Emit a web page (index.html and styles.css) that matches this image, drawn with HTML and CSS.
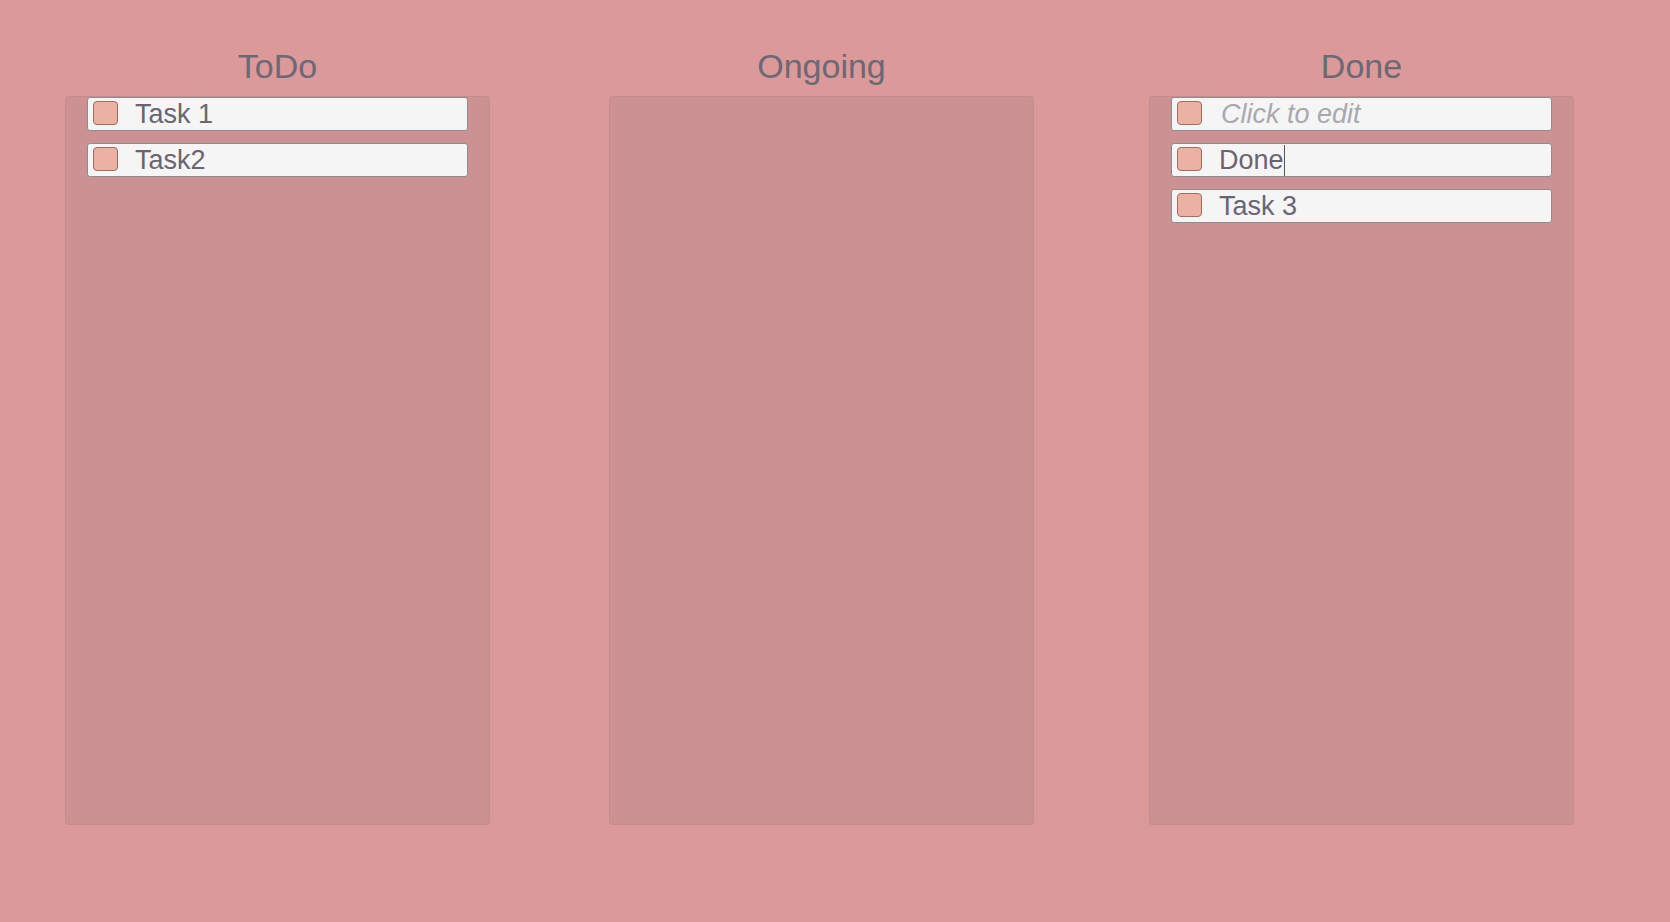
FILE: index.html
```html
<!DOCTYPE html>
<html>
<head>
<meta charset="utf-8">
<title>Board</title>
<link rel="stylesheet" href="styles.css">
</head>
<body>
<main class="board">
  <section class="column">
    <h2 class="column-title">ToDo</h2>
    <div class="column-box">
      <div class="task"><span class="check"></span><span class="task-text">Task 1</span></div>
      <div class="task"><span class="check"></span><span class="task-text">Task2</span></div>
    </div>
  </section>
  <section class="column column-middle">
    <h2 class="column-title">Ongoing</h2>
    <div class="column-box"></div>
  </section>
  <section class="column">
    <h2 class="column-title">Done</h2>
    <div class="column-box">
      <div class="task"><span class="check"></span><span class="task-text placeholder">Click to edit</span></div>
      <div class="task"><span class="check"></span><span class="task-text">Done</span><span class="caret"></span></div>
      <div class="task"><span class="check"></span><span class="task-text">Task 3</span></div>
    </div>
  </section>
</main>
</body>
</html>
```

FILE: styles.css
```css
html, body {
  margin: 0;
  padding: 0;
  background: #db999a;
  height: 100%;
}

body {
  font-family: "Liberation Sans", Arial, sans-serif;
  color: #6b6672;
}

.board {
  display: flex;
  gap: 117px;
  padding: 46px 0 0 65px;
}

.column {
  display: flex;
  flex-direction: column;
  width: 425px;
}

.column-middle {
  margin: 0 -2px 0 2px;
}

.column-title {
  margin: 0 0 10px;
  font-size: 34px;
  line-height: 40px;
  font-weight: normal;
  text-align: center;
  color: #6d6874;
}

.column-box {
  box-sizing: border-box;
  height: 729px;
  background: #cc9293;
  border: 1px solid #c58b8d;
  border-radius: 3px;
  padding: 0 21px;
  display: flex;
  flex-direction: column;
  gap: 12px;
}

.task {
  box-sizing: border-box;
  height: 34px;
  background: #f5f5f5;
  border: 1px solid #8f8c8e;
  border-radius: 3px;
  display: flex;
  align-items: center;
  padding: 0 0 0 5px;
}

.check {
  box-sizing: border-box;
  flex: none;
  width: 25px;
  height: 24px;
  background: #ebb1a3;
  border: 1px solid #a26e64;
  border-radius: 4px;
  margin: 0 17px 2px 0;
}

.task-text {
  font-size: 27px;
  line-height: 30px;
  color: #6a6571;
}

.placeholder {
  font-style: italic;
  color: #aaa8ae;
  margin-left: 2px;
}

.caret {
  width: 1px;
  height: 31px;
  background: #56525a;
}
```
